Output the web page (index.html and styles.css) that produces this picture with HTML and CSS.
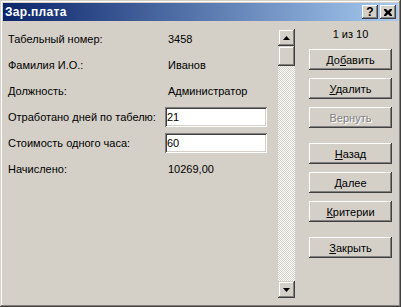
FILE: index.html
```html
<!DOCTYPE html>
<html lang="ru">
<head>
    <meta charset="UTF-8">
    <title>Зар.плата</title>
    <link rel="stylesheet" href="styles.css">
</head>
<body>
    <div class="window">
        <div class="titlebar">
            <span class="title">Зар.плата</span>
            <div class="caption-btns">
                <span class="cap-btn help">?</span>
                <span class="cap-btn">
                    <svg width="8" height="7" viewBox="0 0 8 7"><path d="M0 0h2l2 2 2-2h2v1l-2 2.5 2 2.5v1h-2l-2-2-2 2h-2v-1l2-2.5-2-2.5z" fill="#000"/></svg>
                </span>
            </div>
        </div>

        <div class="client">
            <div class="form">
                <div class="row"><span class="label">Табельный номер:</span><span class="value">3458</span></div>
                <div class="row"><span class="label">Фамилия И.О.:</span><span class="value">Иванов</span></div>
                <div class="row"><span class="label">Должность:</span><span class="value">Администратор</span></div>
                <div class="row"><span class="label">Отработано дней по табелю:</span><input class="field" type="text" value="21"></div>
                <div class="row"><span class="label">Стоимость одного часа:</span><input class="field" type="text" value="60"></div>
                <div class="row"><span class="label">Начислено:</span><span class="value">10269,00</span></div>
            </div>

            <div class="scrollbar">
                <div class="sb-btn">
                    <svg width="7" height="4" viewBox="0 0 7 4"><path d="M3.5 0L7 4H0z" fill="#000"/></svg>
                </div>
                <div class="sb-thumb"></div>
                <div class="sb-track"></div>
                <div class="sb-btn">
                    <svg width="7" height="4" viewBox="0 0 7 4"><path d="M0 0h7L3.5 4z" fill="#000"/></svg>
                </div>
            </div>

            <div class="actions">
                <div class="counter">1 из 10</div>
                <button class="btn">До<u>б</u>авить</button>
                <button class="btn"><u>У</u>далить</button>
                <button class="btn" disabled>Вернуть</button>
                <button class="btn group-start"><u>Н</u>азад</button>
                <button class="btn"><u>Д</u>алее</button>
                <button class="btn"><u>К</u>ритерии</button>
                <button class="btn group-start"><u>З</u>акрыть</button>
            </div>
        </div>
    </div>
</body>
</html>
```

FILE: styles.css
```css
html, body {
    margin: 0;
    padding: 0;
}
body {
    font-family: "Liberation Sans", Arial, sans-serif;
    font-size: 11px;
    color: #000;
    background: #d4d0c8;
}
.window {
    width: 401px;
    height: 307px;
    box-sizing: border-box;
    padding: 3px;
    background: #d4d0c8;
    box-shadow: inset -1px -1px #404040, inset 1px 1px #d4d0c8,
                inset -2px -2px #808080, inset 2px 2px #fff;
    display: flex;
    flex-direction: column;
}
.titlebar {
    height: 18px;
    display: flex;
    align-items: center;
    justify-content: space-between;
    padding: 0 2px 0 2px;
    background: linear-gradient(90deg, #0a246a 0%, #a6caf0 100%);
}
.title {
    color: #fff;
    font-weight: bold;
    font-size: 12px;
    letter-spacing: 0.3px;
}
.caption-btns {
    display: flex;
    gap: 2px;
}
.cap-btn {
    width: 16px;
    height: 14px;
    box-sizing: border-box;
    display: flex;
    align-items: center;
    justify-content: center;
    background: #d4d0c8;
    box-shadow: inset -1px -1px #404040, inset 1px 1px #fff,
                inset -2px -2px #808080, inset 2px 2px #d4d0c8;
}
.cap-btn.help {
    font-weight: bold;
    font-size: 12px;
    line-height: 14px;
}
.client {
    flex: 1;
    display: flex;
    padding: 0 5px 0 5px;
}
.form {
    width: 270px;
    padding-top: 5px;
}
.row {
    height: 26px;
    display: grid;
    grid-template-columns: 157px 102px;
    align-items: center;
}
.value {
    padding-left: 3px;
}
.field {
    width: 102px;
    height: 20px;
    box-sizing: border-box;
    margin: 0;
    padding: 0 2px;
    border: none;
    outline: none;
    font-family: inherit;
    font-size: 11px;
    color: #000;
    background: #fff;
    box-shadow: inset 1px 1px #808080, inset -1px -1px #fff,
                inset 2px 2px #404040, inset -2px -2px #d4d0c8;
}
.scrollbar {
    width: 17px;
    margin: 8px 0 6px 0;
    display: flex;
    flex-direction: column;
}
.sb-btn, .sb-thumb {
    width: 17px;
    height: 17px;
    box-sizing: border-box;
    display: flex;
    align-items: center;
    justify-content: center;
    background: #d4d0c8;
    box-shadow: inset -1px -1px #404040, inset 1px 1px #d4d0c8,
                inset -2px -2px #808080, inset 2px 2px #fff;
}
.sb-thumb {
    height: 20px;
}
.sb-track {
    flex: 1;
    background-color: #d4d0c8;
    background-image: conic-gradient(#fff 25%, #d4d0c8 0 50%, #fff 0 75%, #d4d0c8 0);
    background-size: 2px 2px;
}
.actions {
    margin-left: 14px;
    width: 83px;
    display: flex;
    flex-direction: column;
    gap: 8px;
    padding-top: 6px;
}
.counter {
    height: 14px;
    line-height: 14px;
    text-align: center;
}
.btn {
    width: 83px;
    height: 21px;
    margin: 0;
    padding: 0;
    border: none;
    font-family: inherit;
    font-size: 11px;
    color: #000;
    background: #d4d0c8;
    box-shadow: inset -1px -1px #404040, inset 1px 1px #fff,
                inset -2px -2px #808080, inset 2px 2px #d4d0c8;
}
.btn:disabled {
    color: #808080;
    text-shadow: 1px 1px #fff;
}
.group-start {
    margin-top: 7px;
}
```
